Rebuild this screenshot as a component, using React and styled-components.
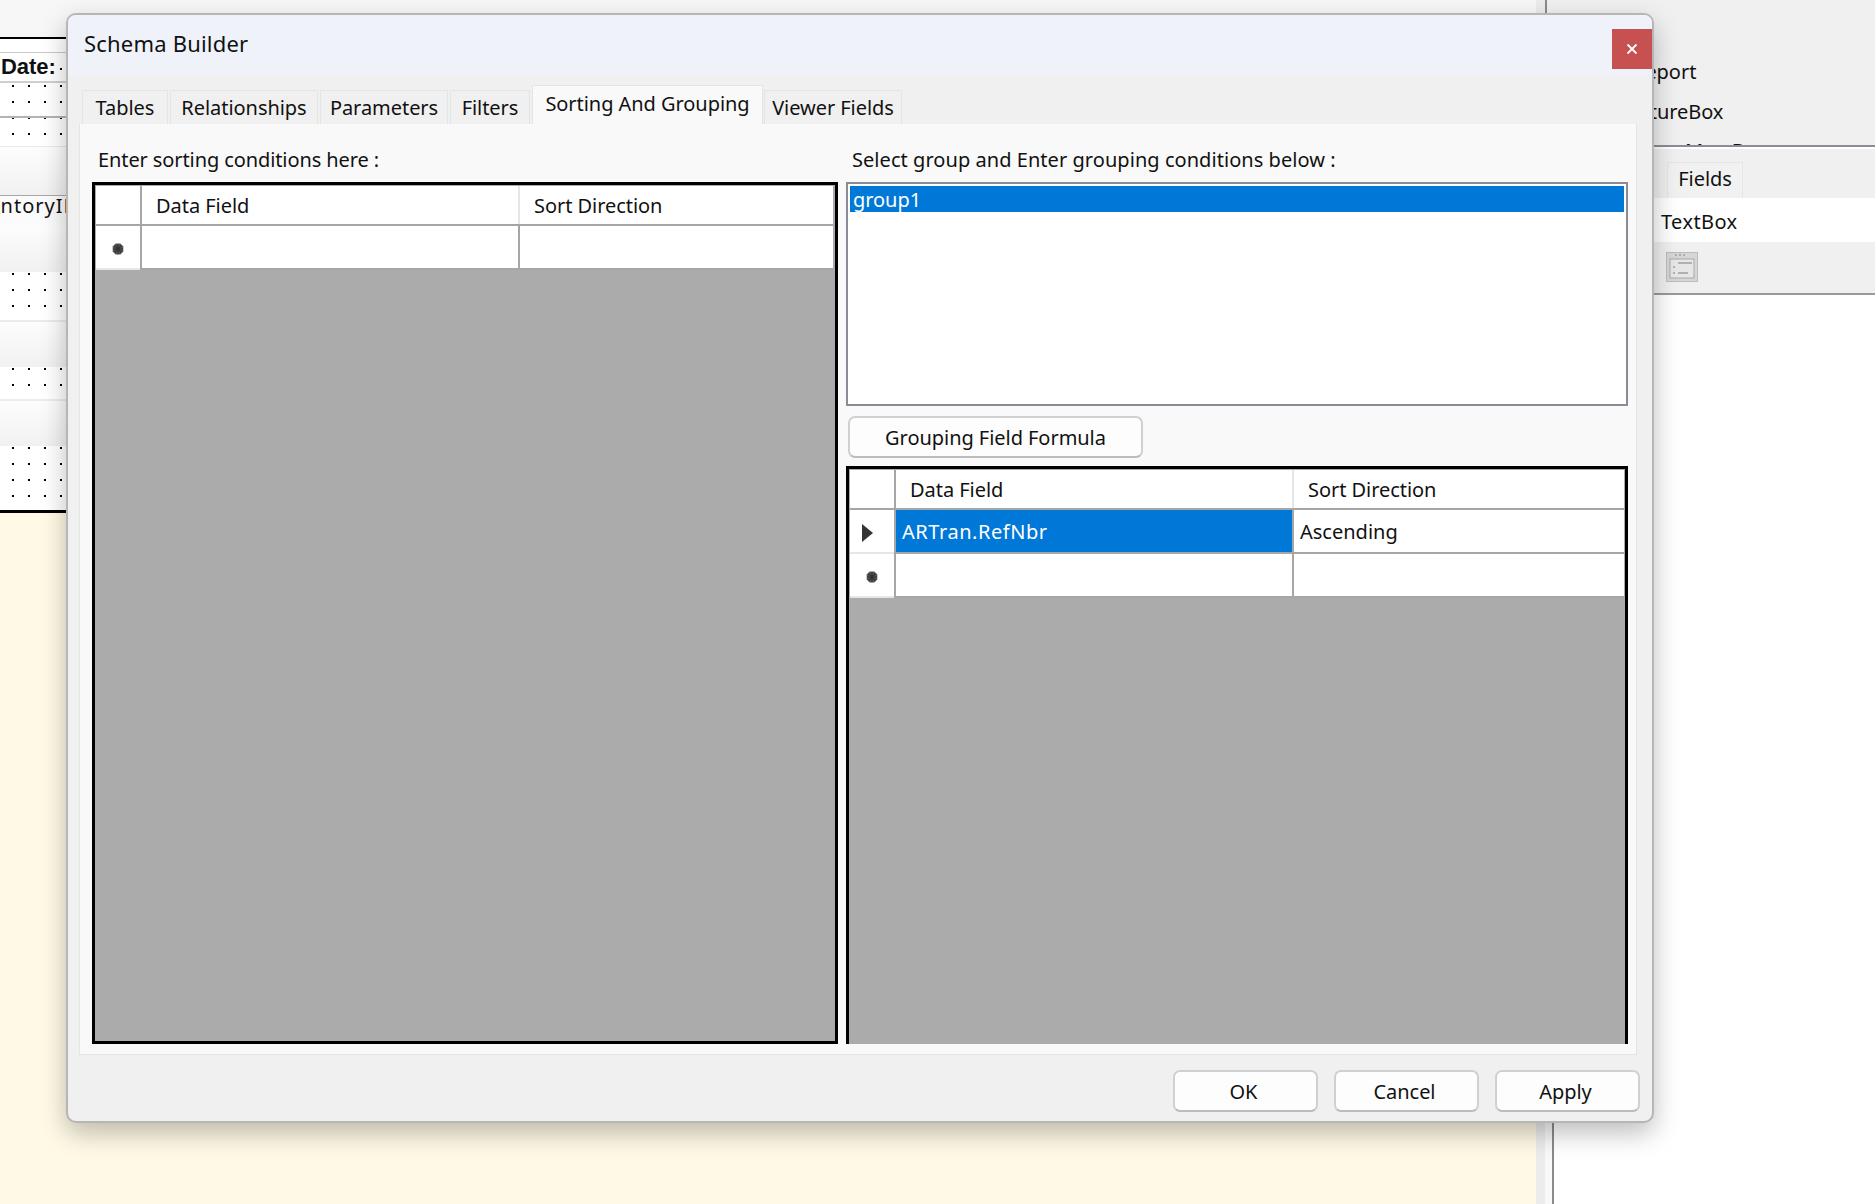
import React from "react";
import styled, { createGlobalStyle } from "styled-components";

const Global = createGlobalStyle`
  html, body { margin: 0; padding: 0; background: #fff; }
  body { font-family: "Noto Sans", "Open Sans", sans-serif; color: #111; }
  * { box-sizing: border-box; }
`;

const Screen = styled.div`
  position: relative;
  width: 1875px;
  height: 1204px;
  overflow: hidden;
  display: flex;
  font-size: 20px;
  letter-spacing: -0.05px;
`;

/* ---------- report designer behind the dialog ---------- */
const Designer = styled.div`
  width: 1536px;
  display: flex;
  flex-direction: column;
  background: #fff9e6;
  flex: none;
`;
const TopGap = styled.div`
  height: 37px;
  background: #f7f7f7;
`;
const Rule = styled.div`
  height: ${(p) => p.$h}px;
  flex: none;
  background: #000;
`;
const Band = styled.div`
  height: ${(p) => p.$h}px;
  flex: none;
  background: ${(p) => (p.$fade ? "linear-gradient(#fdfdfd, #f1f1f1)" : "#fff")};
  border-bottom: ${(p) => p.$line || "0"}px solid ${(p) => p.$color || "#b4b4b4"};
`;
const DotBand = styled(Band)`
  background-color: #fff;
  background-image: conic-gradient(from 270deg at 2px 2px, #000 25%, transparent 0);
  background-size: 16px 16px;
  background-position: 12px ${(p) => p.$dy}px;
`;
const DateRow = styled.div`
  height: 30px;
  flex: none;
  padding: 0 0 0 1px;
  display: flex;
  align-items: center;
  background: #fff linear-gradient(#000, #000) no-repeat 60px 15px / 2px 2px;
  border-bottom: 2px solid #cfcfcf;
  font-family: "Liberation Sans", sans-serif;
  font-weight: 700;
  font-size: 22px;
`;
const FieldRow = styled.div`
  height: 29px;
  flex: none;
  padding-bottom: 10px;
  display: flex;
  align-items: center;
  background: #fbfbfb;
  white-space: nowrap;
`;
const FieldText = styled.span`
  margin-left: -44px;
  letter-spacing: 1px;
`;
const Splitter = styled.div`
  width: 9px;
  flex: none;
  background: #ececec;
`;
const Rail = styled.div`
  width: 9px;
  flex: none;
  display: flex;
  flex-direction: column;
`;
const RailTop = styled.div`
  height: 200px;
  background: #f0f0f0;
  border-left: 2px solid #8a8a8a;
`;
const RailBody = styled.div`
  flex: 1;
  background: #f8f8f8;
  border-right: 2px solid #8a8a8a;
`;
const Side = styled.aside`
  flex: 1;
  display: flex;
  flex-direction: column;
  background: #fff;
`;
const Toolbox = styled.div`
  height: 147px;
  flex: none;
  background: #f0f0f0;
  padding-top: 52px;
  border-bottom: 2px solid #8c8c96;
  overflow: hidden;
`;
const ToolItem = styled.div`
  height: ${(p) => p.$h || 40}px;
  margin-top: ${(p) => p.$mt || 0}px;
  line-height: 40px;
  white-space: nowrap;
  padding-left: ${(p) => p.$pl}px;
`;
const SideTabs = styled.div`
  height: 51px;
  flex: none;
  padding: 13px 0 0 113px;
  background: #f0f0f0;
  border-top: 2px solid #fff;
`;
const SideTab = styled.div`
  width: 76px;
  height: 36px;
  background: #f1f1f1;
  border: 1px solid #e6e6e6;
  border-bottom: 0;
  text-align: center;
  line-height: 32px;
`;
const SideRow = styled.div`
  height: 44px;
  flex: none;
  padding-left: 107px;
  background: #fff;
  line-height: 47px;
  letter-spacing: 0.4px;
`;
const SideIcons = styled.div`
  height: 53px;
  flex: none;
  padding: 10px 0 0 112px;
  background: #f0f0f0;
  border-bottom: 2px solid #9a9a9a;
`;

/* ---------- dialog ---------- */
const Dialog = styled.div`
  position: absolute;
  left: 66px;
  top: 13px;
  width: 1588px;
  height: 1110px;
  display: flex;
  flex-direction: column;
  background: #f0f0f0;
  border: 2px solid #b6b6b6;
  border-radius: 10px;
  box-shadow: 0 10px 26px rgba(0, 0, 0, 0.26);
`;
const TitleBar = styled.header`
  position: relative;
  height: 60px;
  flex: none;
  padding-left: 16px;
  background: #eff3f9;
  border-radius: 8px 8px 0 0;
  font-size: 22px;
  letter-spacing: 0.2px;
  line-height: 57px;
`;
const CloseButton = styled.button`
  position: absolute;
  right: 0;
  top: 14px;
  width: 40px;
  height: 40px;
  padding: 0;
  border: 0;
  background: #c75050;
  display: flex;
  align-items: center;
  justify-content: center;
`;
const TabStrip = styled.nav`
  display: flex;
  align-items: flex-end;
  height: 49px;
  flex: none;
  padding-left: 14px;
`;
const Tab = styled.div`
  width: ${(p) => p.$w}px;
  height: ${(p) => (p.$active ? 39 : 34)}px;
  flex: none;
  margin-right: ${(p) => (p.$active ? 1 : 2)}px;
  background: ${(p) => (p.$active ? "#f9f9f9" : "#f0f0f0")};
  border: 1px solid #e4e4e4;
  border-bottom: 0;
  display: flex;
  align-items: ${(p) => (p.$active ? "flex-start" : "center")};
  justify-content: center;
  line-height: ${(p) => (p.$active ? 35 : 30)}px;
  white-space: nowrap;
`;
const Panel = styled.section`
  margin: 0 15px 0 11px;
  height: 931px;
  flex: none;
  padding: 0 8px 0 12px;
  display: grid;
  grid-template-columns: 746px 782px;
  column-gap: 8px;
  background: #f9f9f9;
  border: 1px solid #e4e4e4;
  border-top: 0;
`;
const Column = styled.div`
  display: flex;
  flex-direction: column;
`;
const Label = styled.div`
  height: 58px;
  padding: 22px 0 0 ${(p) => p.$pl}px;
  line-height: 28px;
  white-space: nowrap;
  letter-spacing: ${(p) => p.$ls || 0}px;
`;
const GridBox = styled.div`
  flex: 1;
  min-height: 0;
  background: #ababab;
  border: 3px solid #000;
  border-bottom-width: ${(p) => (p.$open ? 0 : 3)}px;
  padding: 1px ${(p) => (p.$open ? 1 : 2)}px 0 1px;
  margin-bottom: 10px;
`;
const GridRow = styled.div`
  display: grid;
  grid-template-columns: ${(p) => p.$cols};
  grid-template-rows: minmax(0, 1fr);
  height: ${(p) => p.$h}px;
  background: #a6a6a6;
  column-gap: 2px;
  padding-bottom: 2px;
`;
const HeaderCell = styled.div`
  background: #fff;
  padding-left: ${(p) => p.$pl || 0}px;
  line-height: 40px;
  white-space: nowrap;
  box-shadow: ${(p) => (p.$soft ? "-2px 0 0 #e6e6e6" : "none")};
`;
const Cell = styled.div`
  background: ${(p) => (p.$selected ? "#0078d7" : "#fff")};
  color: ${(p) => (p.$selected ? "#fff" : "#111")};
  padding: 2px 0 0 6px;
  line-height: 40px;
  white-space: nowrap;
  letter-spacing: ${(p) => (p.$selected ? 0.55 : 0)}px;
`;
const RowHeader = styled.div`
  background: #fff;
  display: flex;
  align-items: center;
  justify-content: ${(p) => (p.$start ? "flex-start" : "center")};
  padding: 4px 0 0 ${(p) => (p.$start ? 12 : 0)}px;
  box-shadow: 0 2px 0 #e6e6e6;
`;
const ListBox = styled.div`
  height: 224px;
  flex: none;
  background: #fff;
  border: 2px solid #8b8b96;
  padding: 2px;
`;
const ListItem = styled.div`
  height: 26px;
  line-height: 27px;
  padding-left: 3px;
  background: #0078d7;
  color: #fff;
  overflow: hidden;
`;
const ActionButton = styled.button`
  width: ${(p) => p.$w}px;
  height: 42px;
  flex: none;
  padding: 0 ${(p) => p.$shift || 0}px 0 0;
  background: #fdfdfd;
  border: 2px solid #d0d0d0;
  border-bottom-color: #bcbcbc;
  border-radius: 7px;
  font: inherit;
  letter-spacing: inherit;
  color: #111;
  text-align: center;
`;
const FormulaRow = styled.div`
  height: 60px;
  flex: none;
  padding: 10px 0 0 2px;
`;
const Footer = styled.footer`
  flex: 1;
  display: flex;
  justify-content: flex-end;
  gap: 16px;
  padding: 15px 12px 0 0;
`;

const Star = () => (
  <svg width="12" height="12" viewBox="0 0 12 12">
    <path d="M3.6 0.6h4.8l2.9 2.9v5l-2.9 2.9H3.6L0.7 8.5v-5z" fill="#555" />
    <path d="M6 1v10M1 6h10M2.5 2.5l7 7M9.5 2.5l-7 7" stroke="#333" strokeWidth="1.2" />
  </svg>
);
const Arrow = () => (
  <svg width="11" height="18" viewBox="0 0 11 18">
    <path d="M0 0l11 9L0 18z" fill="#333" />
  </svg>
);
const CloseIcon = () => (
  <svg width="12" height="12" viewBox="0 0 12 12">
    <path d="M1.5 1.5l9 9M10.5 1.5l-9 9" stroke="#fff" strokeWidth="1.8" />
  </svg>
);
const FormIcon = () => (
  <svg width="32" height="30" viewBox="0 0 32 30">
    <rect x="0.5" y="0.5" width="31" height="29" fill="#d6d6d6" stroke="#bdbdbd" />
    <rect x="4" y="7" width="24" height="19" fill="#e6e6e6" stroke="#aaa" />
    <path d="M9 3h2M13 3h2M17 3h2M7 15h2M7 21h2M12 21h10M12 11h14" stroke="#a0a0a0" strokeWidth="1.5" />
  </svg>
);

const LEFT_COLS = "44px 376px 1fr";
const RIGHT_COLS = "44px 396px 1fr";
const TABS = [
  ["Tables", 86],
  ["Relationships", 148],
  ["Parameters", 128],
  ["Filters", 80],
];

export default function App() {
  return (
    <Screen>
      <Global />
      <Designer>
        <TopGap />
        <Rule $h={2} />
        <Band $h={14} $line={1} $color="#c8c8c8" />
        <DateRow>Date:</DateRow>
        <DotBand $h={35} $dy={2} $line={2} />
        <DotBand $h={29} $dy={15} $line={1} $color="#e8e8e8" />
        <Band $h={49} $fade $line={1} $color="#a8a8a8" />
        <FieldRow>
          <FieldText>InventoryID</FieldText>
        </FieldRow>
        <Band $h={47} $fade />
        <DotBand $h={50} $dy={1} $line={2} $color="#ececec" />
        <Band $h={45} $fade />
        <DotBand $h={34} $dy={1} $line={2} $color="#ececec" />
        <Band $h={45} $fade />
        <DotBand $h={64} $dy={1} />
        <Rule $h={3} />
      </Designer>
      <Splitter />
      <Rail>
        <RailTop />
        <RailBody />
      </Rail>
      <Side>
        <Toolbox>
          <ToolItem $pl={79}>Report</ToolItem>
          <ToolItem $pl={69}>PictureBox</ToolItem>
          <ToolItem $pl={131} $h={20} $mt={-1}>Map Box</ToolItem>
        </Toolbox>
        <SideTabs>
          <SideTab>Fields</SideTab>
        </SideTabs>
        <SideRow>TextBox</SideRow>
        <SideIcons>
          <FormIcon />
        </SideIcons>
      </Side>

      <Dialog>
        <TitleBar>
          Schema Builder
          <CloseButton aria-label="Close">
            <CloseIcon />
          </CloseButton>
        </TitleBar>
        <TabStrip>
          {TABS.map(([t, w]) => (
            <Tab key={t} $w={w}>{t}</Tab>
          ))}
          <Tab $w={231} $active>Sorting And Grouping</Tab>
          <Tab $w={138}>Viewer Fields</Tab>
        </TabStrip>
        <Panel>
          <Column>
            <Label $pl={6} $ls={-0.1}>Enter sorting conditions here :</Label>
            <GridBox>
              <GridRow $cols={LEFT_COLS} $h={40}>
                <HeaderCell />
                <HeaderCell $pl={14}>Data Field</HeaderCell>
                <HeaderCell $pl={14} $soft>Sort Direction</HeaderCell>
              </GridRow>
              <GridRow $cols={LEFT_COLS} $h={44}>
                <RowHeader><Star /></RowHeader>
                <Cell />
                <Cell />
              </GridRow>
            </GridBox>
          </Column>
          <Column>
            <Label $pl={6} $ls={0.05}>Select group and Enter grouping conditions below :</Label>
            <ListBox>
              <ListItem>group1</ListItem>
            </ListBox>
            <FormulaRow>
              <ActionButton $w={295}>Grouping Field Formula</ActionButton>
            </FormulaRow>
            <GridBox $open>
              <GridRow $cols={RIGHT_COLS} $h={40}>
                <HeaderCell />
                <HeaderCell $pl={14}>Data Field</HeaderCell>
                <HeaderCell $pl={14} $soft>Sort Direction</HeaderCell>
              </GridRow>
              <GridRow $cols={RIGHT_COLS} $h={44}>
                <RowHeader $start><Arrow /></RowHeader>
                <Cell $selected>ARTran.RefNbr</Cell>
                <Cell>Ascending</Cell>
              </GridRow>
              <GridRow $cols={RIGHT_COLS} $h={44}>
                <RowHeader><Star /></RowHeader>
                <Cell />
                <Cell />
              </GridRow>
            </GridBox>
          </Column>
        </Panel>
        <Footer>
          <ActionButton $w={145} $shift={4}>OK</ActionButton>
          <ActionButton $w={145} $shift={4}>Cancel</ActionButton>
          <ActionButton $w={145} $shift={4}>Apply</ActionButton>
        </Footer>
      </Dialog>
    </Screen>
  );
}
